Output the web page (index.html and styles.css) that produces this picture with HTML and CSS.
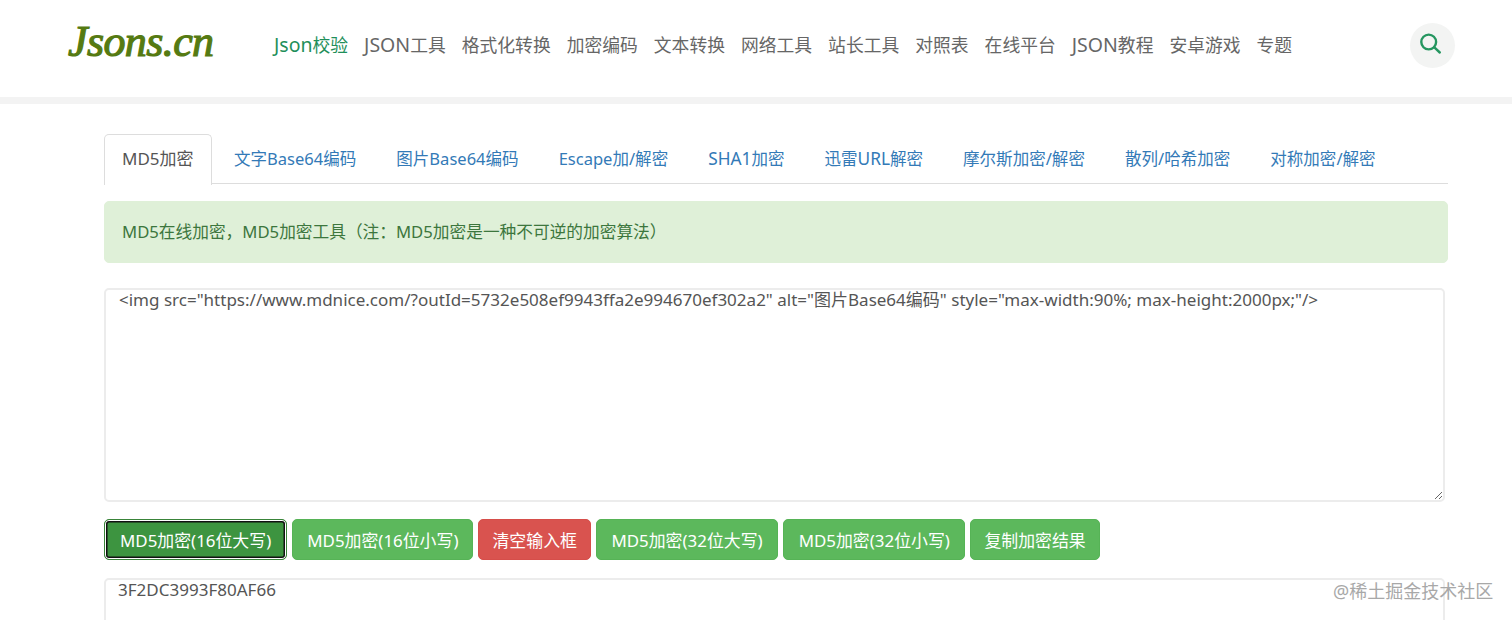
FILE: index.html
```html
<!DOCTYPE html>
<html lang="zh-CN">
<head>
<meta charset="utf-8">
<title>MD5加密</title>
<link rel="stylesheet" href="styles.css">
</head>
<body>
<header class="site-header">
  <a class="logo">Jsons.cn</a>
  <nav class="main-nav">
    <a class="nav-item active"><span class="latin">Json</span>校验</a>
    <a class="nav-item"><span class="latin">JSON</span>工具</a>
    <a class="nav-item">格式化转换</a>
    <a class="nav-item">加密编码</a>
    <a class="nav-item">文本转换</a>
    <a class="nav-item">网络工具</a>
    <a class="nav-item">站长工具</a>
    <a class="nav-item">对照表</a>
    <a class="nav-item">在线平台</a>
    <a class="nav-item"><span class="latin">JSON</span>教程</a>
    <a class="nav-item">安卓游戏</a>
    <a class="nav-item">专题</a>
  </nav>
  <div class="search-btn">
    <svg class="search-icon" viewBox="0 0 26 26" width="26" height="26" aria-hidden="true"><circle cx="8.7" cy="10" r="7.4"/><path d="M14.1 15.2 L19.8 20.5"/></svg>
  </div>
</header>
<main class="container">
  <ul class="tabs">
    <li class="tab active">MD5加密</li>
    <li class="tab">文字Base64编码</li>
    <li class="tab">图片Base64编码</li>
    <li class="tab">Escape加/解密</li>
    <li class="tab"><span class="caps">SHA1</span>加密</li>
    <li class="tab">迅雷<span class="caps">URL</span>解密</li>
    <li class="tab">摩尔斯加密/解密</li>
    <li class="tab">散列/哈希加密</li>
    <li class="tab">对称加密/解密</li>
  </ul>
  <div class="alert">MD5在线加密，MD5加密工具（注：MD5加密是一种不可逆的加密算法）</div>
  <textarea class="field field-input" spellcheck="false">&lt;img src="https://www.mdnice.com/?outId=5732e508ef9943ffa2e994670ef302a2" alt="图片Base64编码" style="max-width:90%; max-height:2000px;"/&gt;</textarea>
  <div class="actions">
    <button class="btn focused">MD5加密(16位大写)</button>
    <button class="btn">MD5加密(16位小写)</button>
    <button class="btn danger narrow">清空输入框</button>
    <button class="btn wide">MD5加密(32位大写)</button>
    <button class="btn wide">MD5加密(32位小写)</button>
    <button class="btn narrow">复制加密结果</button>
  </div>
  <textarea class="field field-output" spellcheck="false">3F2DC3993F80AF66</textarea>
</main>
<div class="watermark">@稀土掘金技术社区</div>
</body>
</html>
```

FILE: styles.css
```css
* { box-sizing: border-box; }
html, body { margin: 0; padding: 0; height: 620px; overflow: hidden; background: #fff; }
body {
  font-family: "Noto Sans", "Noto Sans CJK SC", sans-serif;
  font-size: 16.7px;
  color: #555;
  position: relative;
}
.site-header {
  height: 104px;
  border-bottom: 7px solid #f3f3f3;
  display: flex;
  align-items: center;
  padding: 0 57px 7px 68px;
}
.logo {
  font-family: "Liberation Serif", serif;
  font-style: italic;
  font-size: 44px;
  line-height: 50px;
  padding-bottom: 7px;
  letter-spacing: -0.6px;
  color: #557a12;
  -webkit-text-stroke: 1.2px #557a12;
  width: 206px;
  flex: none;
}
.main-nav { display: flex; gap: 16px; flex: 1; }
.nav-item { font-size: 17.8px; line-height: 20px; color: #666; white-space: nowrap; }
.nav-item.active { color: #1f8f5a; }
.latin { font-size: 19.5px; }
.search-btn {
  width: 45px; height: 45px; border-radius: 50%;
  background: #f3f4f3;
  display: flex; align-items: center; justify-content: center;
  flex: none;
}
.search-icon { fill: none; stroke: #259660; stroke-width: 2.4; stroke-linecap: round; }
.container { padding: 30px 64px 0 104px; }
.tabs {
  list-style: none; margin: 0; padding: 0;
  display: flex; gap: 4px;
  border-bottom: 1px solid #ddd;
  height: 50px;
  font-size: 16.55px;
}
.tab {
  height: 50px;
  padding: 0 17px;
  line-height: 47px;
  color: #337ab7;
  white-space: nowrap;
  border: 1px solid transparent;
  border-bottom: 0;
  border-radius: 5px 5px 0 0;
}
.caps { font-size: 17.3px; }
.tab.active { color: #555; background: #fff; border-color: #ddd; height: 51px; width: 108px; font-size: 17px; }
.alert {
  margin-top: 17px;
  height: 62px;
  line-height: 60px;
  padding: 0 17px;
  background: #dff0d8;
  border: 1px solid #dff0d8;
  border-radius: 5px;
  color: #3c763d;
}
.field {
  display: block;
  width: 1341px;
  font: inherit;
  font-size: 17.03px;
  line-height: 20px;
  color: #555;
  border: 2px solid #ececec;
  border-radius: 5px;
  outline: none;
  background: #fff;
  margin: 0;
}
.field-input { margin-top: 25px; height: 214px; padding: 0 13px; }
.field-output { margin-top: 18px; height: 214px; padding: 0 12px; }
.actions { display: flex; gap: 5px; margin-top: 17px; }
.btn {
  height: 41px;
  padding: 0 14px;
  font: inherit;
  font-size: 16.9px;
  color: #fff;
  background: #5cb85c;
  border: 1px solid #56b356;
  border-radius: 5px;
  white-space: nowrap;
}
.btn.narrow { padding: 0 13px; }
.btn.wide { padding: 0 14.5px; }
.btn.danger { background: #d9534f; border-color: #d64e4a; }
.btn.focused {
  padding: 0 15px;
  background: #3d9440;
  border-color: #398439;
  box-shadow: inset 0 0 0 1px #fff, inset 0 0 0 2.5px #111;
}
.watermark {
  position: absolute;
  left: 1333px; top: 577px;
  font-size: 18px;
  color: #a8a8a8;
  white-space: nowrap;
}
```
